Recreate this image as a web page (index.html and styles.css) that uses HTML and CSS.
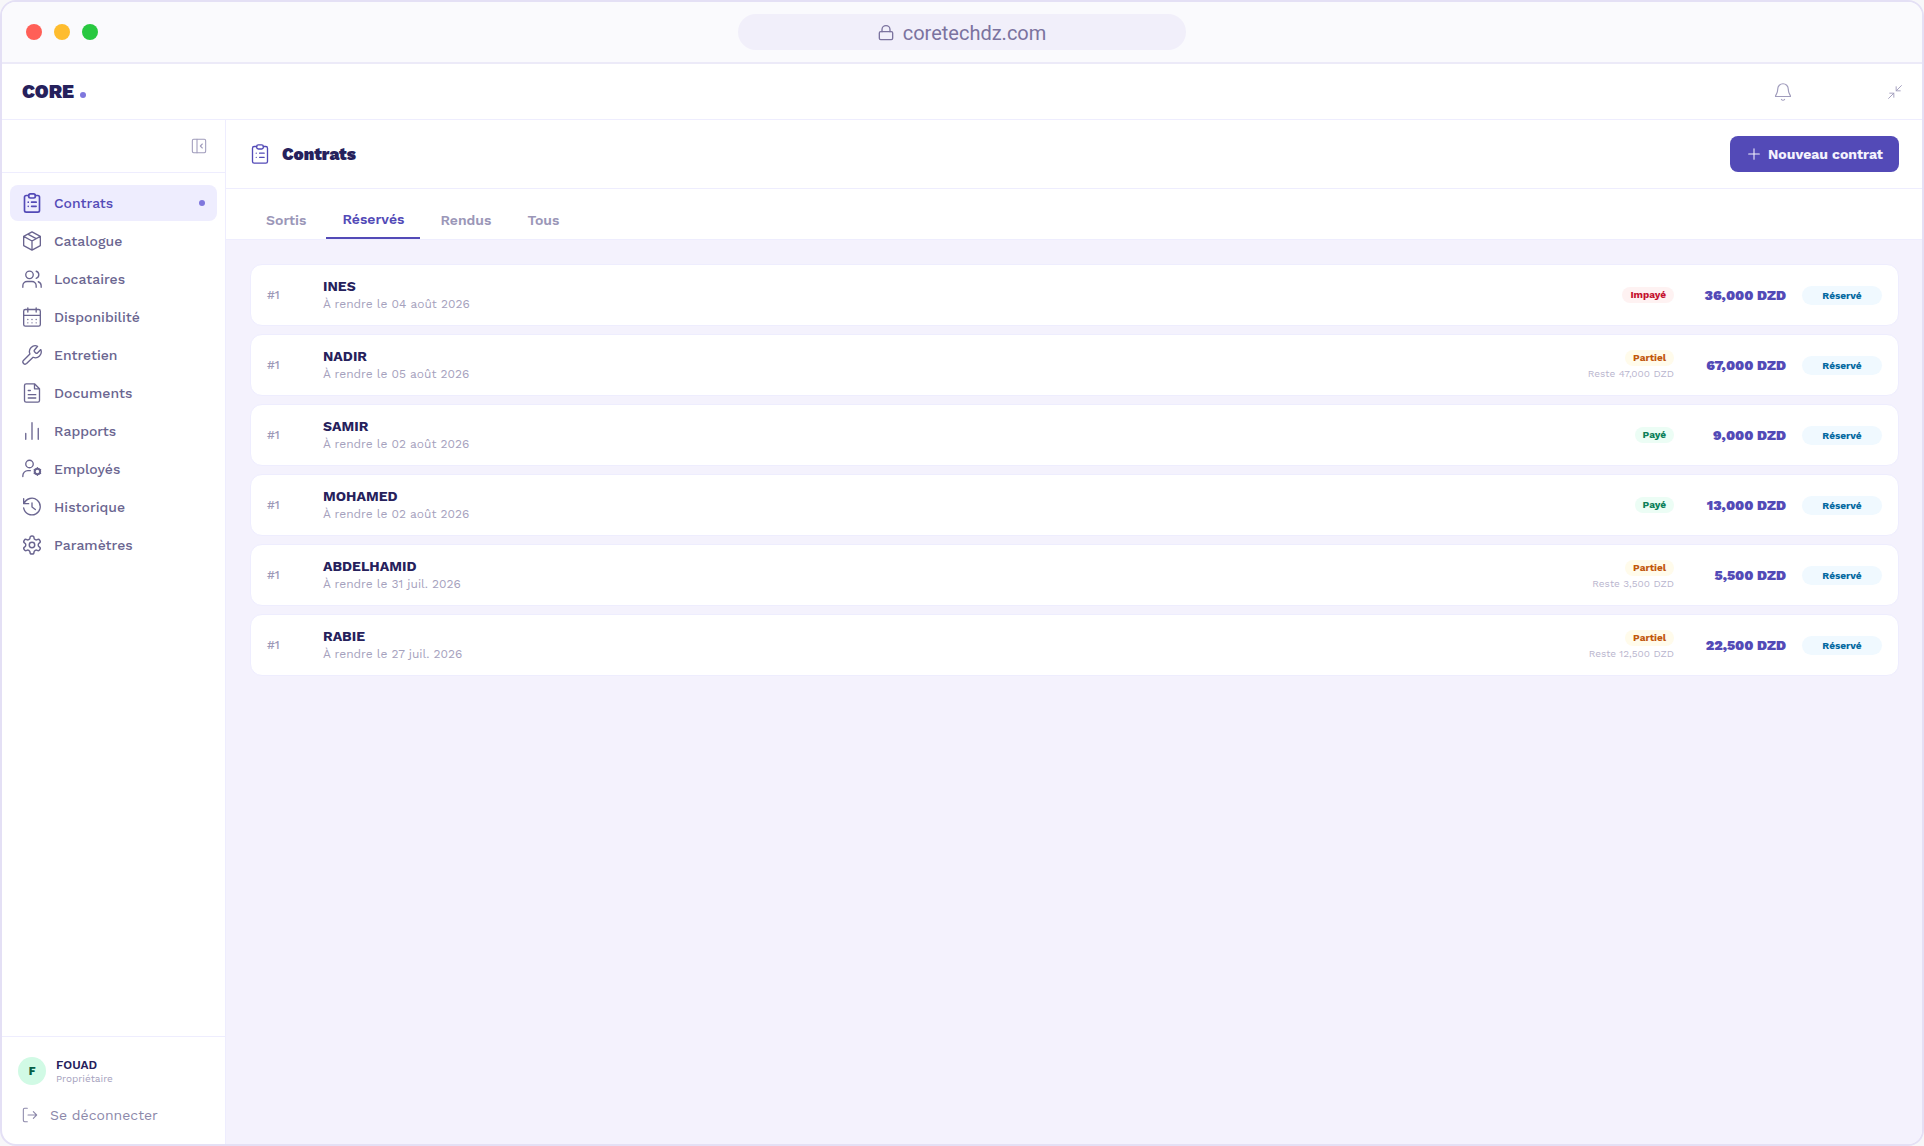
FILE: index.html
```html
<!DOCTYPE html>
<html lang="fr">
<head>
  <meta charset="UTF-8" />
  <meta name="viewport" content="width=device-width, initial-scale=1.0" />
  <title>CORE - Contrats</title>
  <link rel="stylesheet" href="styles.css">
</head>
<body>
  <svg class="sprite" aria-hidden="true">
    <symbol id="i-clipboard" viewBox="0 0 24 24">
      <path d="M8 3H5a2 2 0 0 0-2 2v16a2 2 0 0 0 2 2h14a2 2 0 0 0 2-2V5a2 2 0 0 0-2-2h-3"/>
      <rect x="8" y="1" width="8" height="5" rx="2"/>
      <path d="M7.500 11h.01M7.500 16h.01M11.500 11H17M11.500 16H17"/>
    </symbol>
    <symbol id="i-box" viewBox="0 0 24 24">
      <path d="M12 1l10 5.500v11L12 23 2 17.500v-11zM12 12l10-5.500M12 12v11M12 12L2 6.500M17 9.200L7 3.700"/>
    </symbol>
    <symbol id="i-users" viewBox="0 0 24 24">
      <circle cx="9" cy="7" r="4.500"/>
      <path d="M1 22v-2a5 5 0 0 1 5-5h6a5 5 0 0 1 5 5v2M17 2.700a4.500 4.500 0 0 1 0 8.600M23 22v-2a5 5 0 0 0-3.500-4.700"/>
    </symbol>
    <symbol id="i-calendar" viewBox="0 0 24 24">
      <rect x="2" y="3" width="20" height="20" rx="2"/>
      <path d="M7 1v5M17 1v5M2 10h20M7 15h.01M12 15h.01M17 15h.01M7 19h.01M12 19h.01M17 19h.01"/>
    </symbol>
    <symbol id="i-wrench" viewBox="0 0 24 24">
      <path d="M15 6a1.400 1.400 0 0 0 0 2l1.500 1.500a1.400 1.400 0 0 0 2 0L22.500 5.500a7 7 0 0 1-9.200 9.200L5.500 22.300a2.700 2.700 0 0 1-3.800-3.800L9.500 10.700a7 7 0 0 1 9.200-9.200z"/>
    </symbol>
    <symbol id="i-file" viewBox="0 0 24 24">
      <path d="M15 1H5a2 2 0 0 0-2 2v18a2 2 0 0 0 2 2h14a2 2 0 0 0 2-2V7zM15 1v6h6M7.500 9H10M7.500 14h9M7.500 18h9"/>
    </symbol>
    <symbol id="i-bars" viewBox="0 0 24 24">
      <path d="M4.500 22v-7M12 22V2M19.500 22V9"/>
    </symbol>
    <symbol id="i-usercog" viewBox="0 0 24 24">
      <circle cx="9" cy="6" r="4.500"/>
      <path d="M1 21v-1a6 6 0 0 1 6-6h3"/>
      <circle cx="18.500" cy="15" r="3.300" stroke-width="2.400"/>
      <path d="M18.500 10.500v1M18.500 18.500v1M14.700 12.800l.8.500M21.500 16.700l.8.500M14.700 17.200l.8-.5M21.500 13.300l.8-.5"/>
    </symbol>
    <symbol id="i-history" viewBox="0 0 24 24">
      <path d="M2 2v6h6M2.500 8A10 10 0 1 1 2 13M12 7v5l4 3"/>
    </symbol>
    <symbol id="i-gear" viewBox="1 1 22 22">
      <path d="M12.220 2h-.44a2 2 0 0 0-2 2v.18a2 2 0 0 1-1 1.730l-.43.25a2 2 0 0 1-2 0l-.15-.08a2 2 0 0 0-2.730.730l-.22.38a2 2 0 0 0 .73 2.730l.15.1a2 2 0 0 1 1 1.720v.51a2 2 0 0 1-1 1.740l-.15.09a2 2 0 0 0-.73 2.730l.22.38a2 2 0 0 0 2.730.73l.15-.08a2 2 0 0 1 2 0l.43.25a2 2 0 0 1 1 1.730V20a2 2 0 0 0 2 2h.44a2 2 0 0 0 2-2v-.18a2 2 0 0 1 1-1.730l.43-.25a2 2 0 0 1 2 0l.15.08a2 2 0 0 0 2.730-.73l.22-.39a2 2 0 0 0-.73-2.730l-.15-.08a2 2 0 0 1-1-1.740v-.5a2 2 0 0 1 1-1.740l.15-.09a2 2 0 0 0 .73-2.730l-.22-.38a2 2 0 0 0-2.730-.73l-.15.08a2 2 0 0 1-2 0l-.43-.25a2 2 0 0 1-1-1.730V4a2 2 0 0 0-2-2z"/>
      <circle cx="12" cy="12" r="3"/>
    </symbol>
    <symbol id="i-panel" viewBox="0 0 24 24">
      <rect x="2" y="2" width="20" height="20" rx="2"/>
      <path d="M9 2v20M17 9l-3 3 3 3"/>
    </symbol>
    <symbol id="i-logout" viewBox="0 0 24 24">
      <path d="M8 2H4a2 2 0 0 0-2 2v16a2 2 0 0 0 2 2h4M17 17l5-5-5-5M22 12H9"/>
    </symbol>
    <symbol id="i-bell" viewBox="0 0 24 24">
      <path d="M19 8A7 7 0 0 0 5 8c0 6.500-3 8-3 9.500q0 .5.500.5h19q.5 0 .5-.5C22 16 19 14.500 19 8M10 22a2.500 2.500 0 0 0 4 0"/>
    </symbol>
    <symbol id="i-shrink" viewBox="0 0 24 24">
      <path d="M1 23l9-9M3 14h7v7M23 1l-9 9M14 3v7h7"/>
    </symbol>
    <symbol id="i-plus" viewBox="0 0 24 24">
      <path d="M12 4v16M4 12h16"/>
    </symbol>
    <symbol id="i-lock" viewBox="0 0 24 24">
      <rect x="2" y="10" width="20" height="12" rx="2"/>
      <path d="M6 10V7a6 6 0 0 1 12 0v3"/>
    </symbol>
  </svg>

  <div class="window">
    <div class="titlebar">
      <div class="dots">
        <span class="dot red"></span>
        <span class="dot yellow"></span>
        <span class="dot green"></span>
      </div>
      <div class="url">
        <svg class="icon"><use href="#i-lock"/></svg>
        <span>coretechdz.com</span>
      </div>
    </div>

    <header class="topbar">
      <a class="logo" href="#">CORE<span class="logo-dot"></span></a>
      <div class="top-actions">
        <button class="icon-btn bell" aria-label="Notifications"><svg class="icon"><use href="#i-bell"/></svg></button>
        <button class="icon-btn shrink" aria-label="Réduire"><svg class="icon"><use href="#i-shrink"/></svg></button>
      </div>
    </header>

    <div class="layout">
      <aside class="sidebar">
        <div class="sidebar-head">
          <button class="icon-btn panel" aria-label="Replier le menu"><svg class="icon"><use href="#i-panel"/></svg></button>
        </div>
        <nav class="menu">
          <a class="active" href="#"><svg class="icon"><use href="#i-clipboard"/></svg>Contrats</a>
          <a href="#"><svg class="icon"><use href="#i-box"/></svg>Catalogue</a>
          <a href="#"><svg class="icon"><use href="#i-users"/></svg>Locataires</a>
          <a href="#"><svg class="icon"><use href="#i-calendar"/></svg>Disponibilité</a>
          <a href="#"><svg class="icon"><use href="#i-wrench"/></svg>Entretien</a>
          <a href="#"><svg class="icon"><use href="#i-file"/></svg>Documents</a>
          <a href="#"><svg class="icon"><use href="#i-bars"/></svg>Rapports</a>
          <a href="#"><svg class="icon"><use href="#i-usercog"/></svg>Employés</a>
          <a href="#"><svg class="icon"><use href="#i-history"/></svg>Historique</a>
          <a href="#"><svg class="icon"><use href="#i-gear"/></svg>Paramètres</a>
        </nav>
        <div class="sidebar-foot">
          <div class="user">
            <span class="avatar">F</span>
            <div>
              <p class="user-name">FOUAD</p>
              <p class="user-role">Propriétaire</p>
            </div>
          </div>
          <button class="logout"><svg class="icon"><use href="#i-logout"/></svg>Se déconnecter</button>
        </div>
      </aside>

      <main>
        <div class="page-head">
          <svg class="icon"><use href="#i-clipboard"/></svg>
          <h1>Contrats</h1>
          <button class="new-btn"><svg class="icon"><use href="#i-plus"/></svg>Nouveau contrat</button>
        </div>
        <div class="tabs">
          <button>Sortis</button>
          <button class="active">Réservés</button>
          <button>Rendus</button>
          <button>Tous</button>
        </div>

        <div class="list">
          <article class="card">
            <span class="num">#1</span>
            <div class="client"><h2>INES</h2><p>À rendre le 04 août 2026</p></div>
            <div class="payment"><span class="badge unpaid">Impayé</span></div>
            <span class="amount">36,000 DZD</span>
            <span class="status">Réservé</span>
          </article>
          <article class="card">
            <span class="num">#1</span>
            <div class="client"><h2>NADIR</h2><p>À rendre le 05 août 2026</p></div>
            <div class="payment"><span class="badge partial">Partiel</span><small>Reste 47,000 DZD</small></div>
            <span class="amount">67,000 DZD</span>
            <span class="status">Réservé</span>
          </article>
          <article class="card">
            <span class="num">#1</span>
            <div class="client"><h2>SAMIR</h2><p>À rendre le 02 août 2026</p></div>
            <div class="payment"><span class="badge paid">Payé</span></div>
            <span class="amount">9,000 DZD</span>
            <span class="status">Réservé</span>
          </article>
          <article class="card">
            <span class="num">#1</span>
            <div class="client"><h2>MOHAMED</h2><p>À rendre le 02 août 2026</p></div>
            <div class="payment"><span class="badge paid">Payé</span></div>
            <span class="amount">13,000 DZD</span>
            <span class="status">Réservé</span>
          </article>
          <article class="card">
            <span class="num">#1</span>
            <div class="client"><h2>ABDELHAMID</h2><p>À rendre le 31 juil. 2026</p></div>
            <div class="payment"><span class="badge partial">Partiel</span><small>Reste 3,500 DZD</small></div>
            <span class="amount">5,500 DZD</span>
            <span class="status">Réservé</span>
          </article>
          <article class="card">
            <span class="num">#1</span>
            <div class="client"><h2>RABIE</h2><p>À rendre le 27 juil. 2026</p></div>
            <div class="payment"><span class="badge partial">Partiel</span><small>Reste 12,500 DZD</small></div>
            <span class="amount">22,500 DZD</span>
            <span class="status">Réservé</span>
          </article>
        </div>
      </main>
    </div>
  </div>
</body>
</html>
```
FILE: styles.css
```css
* {
  box-sizing: border-box;
  margin: 0;
  padding: 0;
}

body {
  font-family: "Work Sans", Inter, sans-serif;
  font-size: 14px;
  color: #26215c;
  background-color: #f7f7f9;
}

button {
  font: inherit;
  color: inherit;
  background: none;
  border: none;
  cursor: pointer;
}

a {
  color: inherit;
  text-decoration: none;
}

.sprite {
  display: none;
}

.icon {
  width: 20px;
  height: 20px;
  flex-shrink: 0;
  fill: none;
  stroke: currentColor;
  stroke-width: 1.6;
  stroke-linecap: round;
  stroke-linejoin: round;
}

.window {
  min-height: 100vh;
  display: flex;
  flex-direction: column;
  border: 2px solid #e4e0f5;
  border-radius: 16px;
  overflow: hidden;
  background-color: white;
}

/* Browser bar */
.titlebar {
  display: grid;
  grid-template-columns: 1fr 448px 1fr;
  align-items: center;
  height: 62px;
  padding: 0 24px;
  background-color: #fafafd;
  border-bottom: 2px solid #eceaf8;
}

.dots {
  display: flex;
  gap: 12px;
}

.dot {
  width: 16px;
  height: 16px;
  border-radius: 50%;
}

.red { background-color: #ff5f57; }
.yellow { background-color: #febc2e; }
.green { background-color: #28c840; }

.url {
  display: flex;
  align-items: center;
  justify-content: center;
  gap: 9px;
  height: 36px;
  padding-top: 1px;
  border-radius: 18px;
  background-color: #f1effa;
  color: #7b739f;
  font-family: Roboto, sans-serif;
  font-size: 20px;
}

.url .icon {
  width: 16px;
  height: 16px;
  stroke-width: 2;
}

/* App header */
.topbar {
  display: flex;
  align-items: center;
  justify-content: space-between;
  height: 56px;
  padding: 0 20px;
  border-bottom: 1px solid #eeedfe;
}

.logo {
  display: flex;
  align-items: baseline;
  gap: 6px;
  font-size: 19px;
  font-weight: 900;
}

.logo-dot {
  width: 6px;
  height: 6px;
  border-radius: 50%;
  background-color: #7f77dd;
}

.top-actions {
  display: flex;
  align-items: center;
  gap: 96px;
}

.icon-btn {
  display: flex;
  color: #a09cbc;
}

.bell .icon {
  width: 18px;
  height: 18px;
}

.shrink .icon {
  width: 14px;
  height: 14px;
}

.panel .icon {
  width: 16px;
  height: 16px;
}

.layout {
  flex: 1;
  display: flex;
}

/* Sidebar */
.sidebar {
  width: 224px;
  flex-shrink: 0;
  display: flex;
  flex-direction: column;
  border-right: 1px solid #eeedfe;
}

.sidebar-head {
  display: flex;
  align-items: center;
  justify-content: flex-end;
  height: 53px;
  padding: 0 18px;
  border-bottom: 1px solid #eeedfe;
}

.menu {
  flex: 1;
  display: flex;
  flex-direction: column;
  gap: 2px;
  padding: 12px 8px;
}

.menu a {
  display: flex;
  align-items: center;
  gap: 12px;
  height: 36px;
  padding: 0 12px;
  border-radius: 8px;
  color: #6a6590;
  font-weight: 500;
}

.menu a.active {
  background-color: #eeedfe;
  color: #534ab7;
}

.menu a.active::after {
  content: "";
  width: 6px;
  height: 6px;
  margin-left: auto;
  border-radius: 50%;
  background-color: #7f77dd;
}

.menu a.active .icon {
  stroke-width: 2;
}

.sidebar-foot {
  padding: 20px 16px 15px;
  border-top: 1px solid #eeedfe;
}

.user {
  display: flex;
  align-items: center;
  gap: 10px;
}

.avatar {
  display: flex;
  align-items: center;
  justify-content: center;
  width: 28px;
  height: 28px;
  border-radius: 50%;
  background-color: #d1fae5;
  color: #065f46;
  font-size: 11px;
  font-weight: 800;
}

.user-name {
  font-size: 12px;
  line-height: 14px;
  font-weight: 600;
}

.user-role {
  font-size: 10px;
  line-height: 13px;
  color: #a5a1bd;
}

.logout {
  display: flex;
  align-items: center;
  gap: 12px;
  height: 28px;
  margin-top: 16px;
  padding: 0 4px;
  color: #8c88aa;
}

.logout .icon {
  width: 16px;
  height: 16px;
}

/* Contracts page */
main {
  flex: 1;
  min-width: 0;
  background-color: #f4f2fd;
}

.page-head {
  display: flex;
  align-items: center;
  gap: 12px;
  height: 69px;
  padding: 0 23px 0 24px;
  background-color: white;
  border-bottom: 1px solid #eeedfe;
  color: #534ab7;
}

.page-head h1 {
  color: #26215c;
  font-size: 17px;
  font-weight: 900;
}

.new-btn {
  display: flex;
  align-items: center;
  gap: 6px;
  height: 36px;
  margin-left: auto;
  padding: 0 16px;
  border-radius: 8px;
  background-color: #534ab7;
  color: #f4f2fd;
  font-weight: 700;
}

.new-btn .icon {
  width: 16px;
  height: 16px;
}

.tabs {
  display: flex;
  gap: 4px;
  height: 51px;
  padding: 12px 24px 0;
  background-color: white;
  border-bottom: 1px solid #eeedfe;
}

.tabs button {
  padding: 0 16px;
  color: #9b97b8;
  font-weight: 600;
}

.tabs .active {
  border-bottom: 2px solid #534ab7;
  color: #534ab7;
}

.list {
  display: flex;
  flex-direction: column;
  gap: 8px;
  padding: 24px 23px 24px 24px;
}

.card {
  display: flex;
  align-items: center;
  gap: 16px;
  height: 62px;
  padding: 0 16px;
  border: 1px solid #eeedfe;
  border-radius: 12px;
  background-color: white;
}

.num {
  width: 40px;
  color: #9d99b8;
  font-size: 12px;
  font-weight: 500;
}

.client {
  flex: 1;
}

.client h2 {
  font-size: 14px;
  line-height: 18px;
  font-weight: 700;
}

.client p {
  color: #a5a1bd;
  font-size: 12px;
  line-height: 18px;
}

.payment {
  display: flex;
  flex-direction: column;
  align-items: flex-end;
  gap: 1px;
}

.payment small {
  color: #b9b5ce;
  font-size: 10px;
  line-height: 13px;
}

.badge {
  padding: 0 8px;
  border-radius: 8px;
  font-size: 10px;
  line-height: 16px;
  font-weight: 700;
}

.unpaid {
  background-color: #fef2f2;
  color: #c5112e;
}

.partial {
  background-color: #fffbeb;
  color: #c2570c;
}

.paid {
  background-color: #ecfdf5;
  color: #0b8059;
}

.amount {
  width: 96px;
  color: #534ab7;
  font-weight: 900;
  text-align: right;
}

.status {
  width: 80px;
  border-radius: 10px;
  background-color: #f0f9ff;
  color: #0369a1;
  font-size: 10px;
  line-height: 19px;
  font-weight: 700;
  text-align: center;
}
```
